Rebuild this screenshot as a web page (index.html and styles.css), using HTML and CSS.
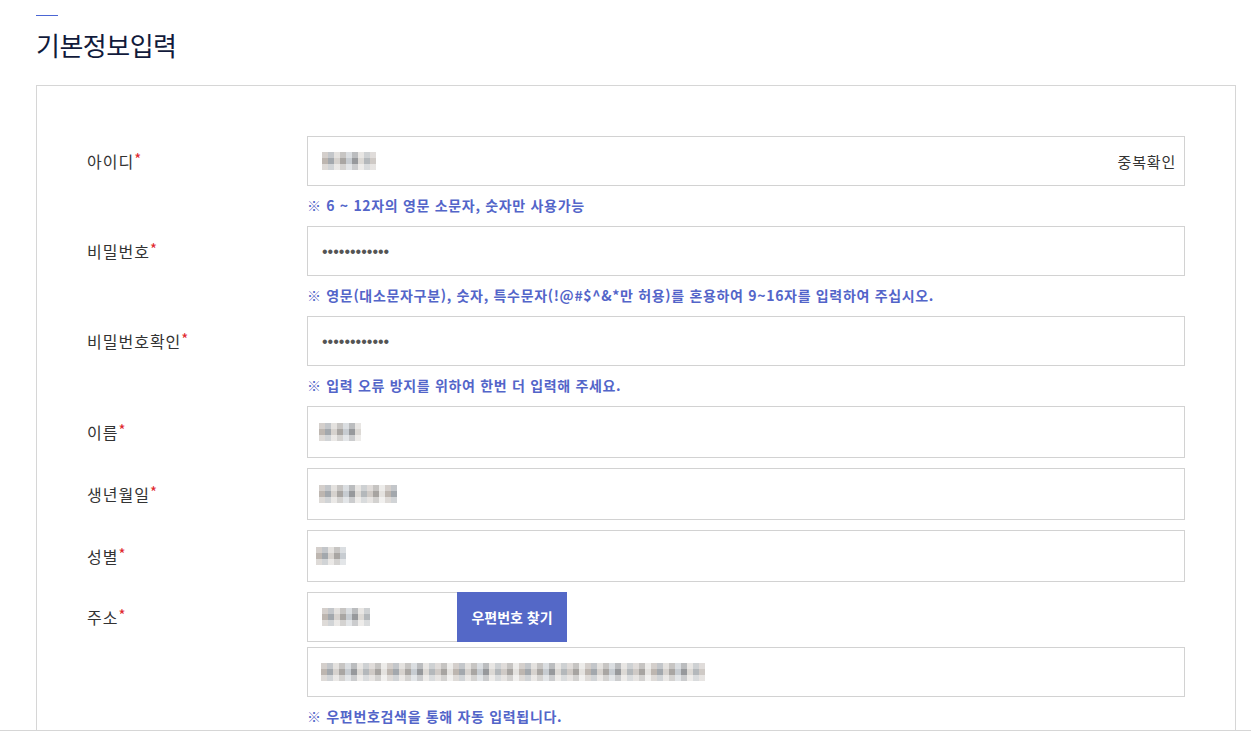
FILE: index.html
```html
<!DOCTYPE html>
<html lang="ko">
<head>
<meta charset="utf-8">
<title>기본정보입력</title>
<link rel="stylesheet" href="styles.css">
</head>
<body>
<div class="viewport">
  <div class="page">
    <div class="title-bar"></div>
    <h2 class="title">기본정보입력</h2>
    <div class="form-box">
      <div class="row">
        <div class="label">아이디<span class="req">*</span></div>
        <div class="field">
          <div class="input h50">
            <span class="mosaic m-id"></span>
            <span class="input-action">중복확인</span>
          </div>
          <p class="help">※ 6 ~ 12자의 영문 소문자, 숫자만 사용가능</p>
        </div>
      </div>
      <div class="row">
        <div class="label">비밀번호<span class="req">*</span></div>
        <div class="field">
          <div class="input h50"><span class="dots">••••••••••••</span></div>
          <p class="help">※ 영문(대소문자구분), 숫자, 특수문자(!@#$^&amp;*만 허용)를 혼용하여 9~16자를 입력하여 주십시오.</p>
        </div>
      </div>
      <div class="row">
        <div class="label">비밀번호확인<span class="req">*</span></div>
        <div class="field">
          <div class="input h50"><span class="dots">••••••••••••</span></div>
          <p class="help">※ 입력 오류 방지를 위하여 한번 더 입력해 주세요.</p>
        </div>
      </div>
      <div class="row">
        <div class="label h52">이름<span class="req">*</span></div>
        <div class="field">
          <div class="input h52"><span class="mosaic m-name"></span></div>
        </div>
      </div>
      <div class="row">
        <div class="label h52">생년월일<span class="req">*</span></div>
        <div class="field">
          <div class="input h52"><span class="mosaic m-birth"></span></div>
        </div>
      </div>
      <div class="row">
        <div class="label h52">성별<span class="req">*</span></div>
        <div class="field">
          <div class="input h52"><span class="mosaic m-sex"></span></div>
        </div>
      </div>
      <div class="row">
        <div class="label">주소<span class="req">*</span></div>
        <div class="field">
          <div class="zip-line">
            <div class="input h50 zip"><span class="mosaic m-zip"></span></div>
            <button class="zip-btn" type="button">우편번호 찾기</button>
          </div>
          <div class="input h50 addr"><span class="mosaic m-addr"></span></div>
          <p class="help">※ 우편번호검색을 통해 자동 입력됩니다.</p>
        </div>
      </div>
    </div>
  </div>
</div>
</body>
</html>
```

FILE: styles.css
```css
* { box-sizing: border-box; }
html, body { margin: 0; padding: 0; background: #fff; }
body {
  font-family: "Noto Sans CJK KR", "Noto Sans", sans-serif;
  color: #333;
}
.viewport {
  height: 731px;
  overflow: hidden;
  border-bottom: 1px solid #d6d6d6;
}
.page {
  padding: 15px 15px 0 36px;
}
.title-bar {
  width: 22px;
  height: 1px;
  background: #4b66d4;
}
.title {
  margin: 13px 0 0;
  font-size: 26px;
  font-weight: 400;
  line-height: 32px;
  color: #111a3b;
  letter-spacing: -0.5px;
}
.form-box {
  margin-top: 24px;
  width: 1200px;
  border: 1px solid #d6d6d6;
  padding: 50px 50px 80px 50px;
  display: flex;
  flex-direction: column;
  gap: 10px;
}
.row {
  display: flex;
  align-items: flex-start;
}
.label {
  width: 220px;
  flex: none;
  height: 50px;
  display: flex;
  align-items: center;
  font-size: 16px;
  letter-spacing: 1px;
  color: #333;
  padding-bottom: 1px;
}
.label.h52 { height: 52px; }
.req {
  color: #e0262c;
  font-size: 15px;
  align-self: center;
  margin-top: -5px;
  margin-left: 0;
}
.field {
  flex: 1;
  display: flex;
  flex-direction: column;
}
.input {
  border: 1px solid #d2d2d2;
  background: #fff;
  display: flex;
  align-items: center;
  padding: 0 9px 0 14px;
}
.input.h50 { height: 50px; }
.input.h52 { height: 52px; }
.input-action {
  margin-left: auto;
  font-size: 15px;
  letter-spacing: 0.8px;
  margin-right: -1px;
  color: #333;
}
.dots {
  font-family: "Liberation Sans", sans-serif;
  font-size: 16px;
  color: #555;
  margin-top: 1px;
}
.help {
  margin: 8px 0 0;
  line-height: 22px;
  font-size: 14px;
  font-weight: 700;
  letter-spacing: 0.68px;
  color: #5365c9;
}
.zip-line {
  display: flex;
}
.input.zip {
  width: 150px;
  border-right: none;
}
.zip-btn {
  width: 110px;
  height: 50px;
  border: none;
  background: #5468c7;
  color: #fff;
  font-family: inherit;
  font-size: 14px;
  font-weight: 700;
  padding: 0;
  cursor: pointer;
}
.input.addr {
  margin-top: 5px;
}
.mosaic {
  display: inline-block;
  height: 18px;
  background-image:
    linear-gradient(to bottom, rgba(255,255,255,0.35) 0 6px, rgba(255,255,255,0) 6px 12px, rgba(255,255,255,0.5) 12px 18px),
    repeating-linear-gradient(90deg, #bdb6b0 0 6px, #a3a8ad 6px 12px, #d6d2ce 12px 18px, #a9a6a3 18px 24px, #c7ccd1 24px 30px, #97999c 30px 36px, #dcd9d5 36px 42px, #b4b8bb 42px 48px, #cfcac6 48px 54px, #a7a4a1 54px 60px, #e4e2df 60px 66px);
}
.m-id { width: 54px; }
.m-name { width: 42px; margin-left: -3px; }
.m-birth { width: 78px; margin-left: -3px; }
.m-sex { width: 30px; margin-left: -6px; }
.m-zip { width: 48px; margin-left: 0; }
.m-addr { width: 384px; margin-left: -1px; }
```
